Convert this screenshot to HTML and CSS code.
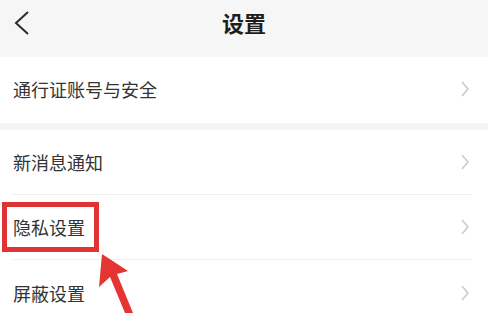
FILE: index.html
```html
<!DOCTYPE html>
<html lang="zh-CN">
<head>
  <meta charset="UTF-8" />
  <meta name="viewport" content="width=device-width, initial-scale=1.0"/>
  <title>设置</title>
  <link rel="stylesheet" href="styles.css">
</head>
<body>
  <div class="page">
    <div class="nav">
      <svg class="back" width="16" height="24" viewBox="0 0 16 24">
        <polyline points="14,1 2,12 14,23" />
      </svg>
      <h1 class="title">设置</h1>
    </div>

    <div class="group">
      <div class="row row-tall">
        <span>通行证账号与安全</span>
        <svg class="chev" width="10" height="16" viewBox="0 0 10 16"><polyline points="2,1 8,8 2,15" /></svg>
      </div>
    </div>

    <div class="group">
      <div class="row">
        <span>新消息通知</span>
        <svg class="chev" width="10" height="16" viewBox="0 0 10 16"><polyline points="2,1 8,8 2,15" /></svg>
      </div>
      <div class="row">
        <span>隐私设置</span>
        <svg class="chev" width="10" height="16" viewBox="0 0 10 16"><polyline points="2,1 8,8 2,15" /></svg>
      </div>
      <div class="row">
        <span>屏蔽设置</span>
        <svg class="chev" width="10" height="16" viewBox="0 0 10 16"><polyline points="2,1 8,8 2,15" /></svg>
      </div>
    </div>

    <!-- annotation overlay -->
    <div class="mark"></div>
    <svg class="arrow" width="488" height="313" viewBox="0 0 488 313">
      <polygon points="102,254 128,271 117,274 133,313 125,313 110,277 99,287" />
    </svg>
  </div>
</body>
</html>
```

FILE: styles.css
```css
* {
  box-sizing: border-box;
}

body {
  margin: 0;
  font-family: "Noto Sans CJK SC", "Noto Sans", sans-serif;
  background: #f4f4f4;
}

.page {
  position: relative;
  width: 488px;
  height: 313px;
  overflow: hidden;
  background: #f4f4f4;
}

.nav {
  height: 57px;
  display: flex;
  align-items: center;
  justify-content: center;
  position: relative;
  background: #f6f6f6;
}

.back {
  position: absolute;
  left: 14px;
  top: 11px;
}

.back polyline {
  fill: none;
  stroke: #2b2b2b;
  stroke-width: 2;
}

.title {
  margin: 0 0 14px 0;
  font-size: 22px;
  font-weight: 700;
  color: #1e1e1e;
}

.group {
  background: #fff;
  margin-bottom: 7px;
}

.row {
  height: 65px;
  margin: 0 16px 0 12px;
  padding: 0 2px 0 1px;
  display: flex;
  align-items: center;
  justify-content: space-between;
  font-size: 18px;
  color: #333;
  border-bottom: 1px solid #f1f1f1;
}

.row:last-child {
  border-bottom: none;
}

.row-tall {
  height: 66px;
  padding-bottom: 3px;
}

.chev polyline {
  fill: none;
  stroke: #c9c9c9;
  stroke-width: 1.5;
}

.mark {
  position: absolute;
  left: 2px;
  top: 202px;
  width: 97px;
  height: 50px;
  border: 5px solid #e03434;
}

.arrow {
  position: absolute;
  left: 0;
  top: 0;
}

.arrow polygon {
  fill: #e53533;
}
```
